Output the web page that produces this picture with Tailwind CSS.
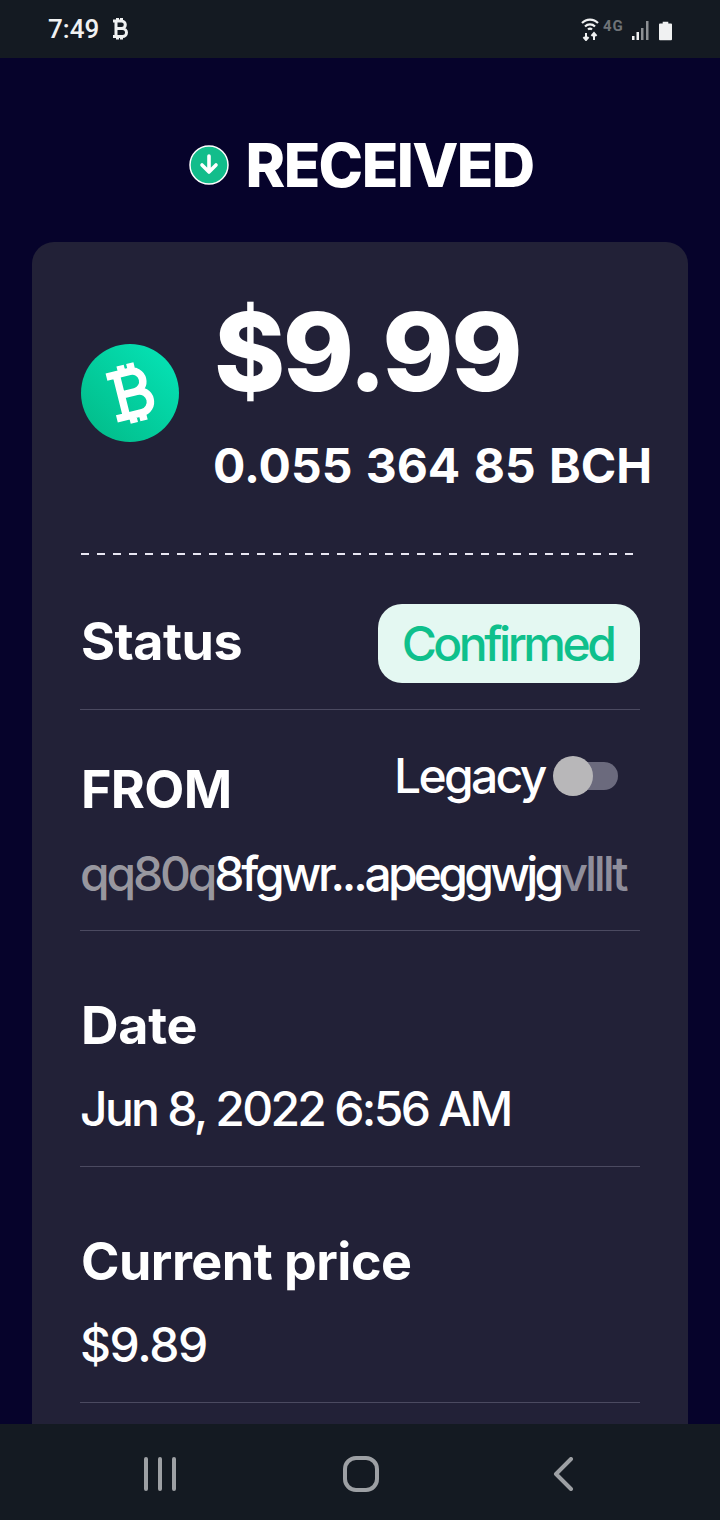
<!DOCTYPE html>
<html lang="en">

<head>
  <meta charset="UTF-8">
  <meta name="viewport" content="width=device-width, initial-scale=1.0">
  <title>Received</title>
  <script src="https://cdn.jsdelivr.net/npm/@tailwindcss/browser@4"></script>
</head>

<body class="bg-[#06032b] font-['Inter',sans-serif] text-white">
  <div class="relative flex h-[1520px] w-[720px] flex-col overflow-hidden">
    <!-- status bar -->
    <div class="flex h-[58px] shrink-0 items-center justify-between bg-[#141a22] pl-[48px] pr-[48px]">
      <div class="flex items-center gap-[13px]">
        <span class="font-['Roboto',sans-serif] text-[26px] font-medium leading-none text-[#f0f1f2]">7:49</span>
        <svg width="16" height="24" viewBox="0 0 16 24" fill="none" stroke="#f0f1f2" stroke-width="3">
          <path d="M1 4h8.500a3.600 3.600 0 0 1 0 7.600H3.500h7a3.900 3.900 0 0 1 0 8H1M4 4v15.600M5.500 1v3M9.500 1v3M5.500 19.600v3M9.500 19.600v3" />
        </svg>
      </div>
      <div class="flex items-end">
        <svg width="18" height="24" viewBox="0 0 18 24" fill="none" stroke="#f0f1f2" stroke-width="2.200">
          <path d="M1 6a11 11 0 0 1 16 0M4 9.500a7 7 0 0 1 10 0M7 12.500a3 3 0 0 1 4 0" />
          <path stroke-width="2" d="M5 16v7M2.500 20l2.500 3 2.500-3M13 23v-7M10.500 19l2.500-3 2.500 3" />
        </svg>
        <span class="mb-[7px] ml-[4px] w-[26px] font-['Roboto',sans-serif] text-[15px] font-bold leading-none tracking-[1px] text-[#6f7378]">4G</span>
        <svg width="18" height="20" viewBox="0 0 18 20" fill="#8d9094" class="ml-[3px]">
          <rect x="0" y="15" width="2.500" height="4" fill="#f0f1f2" />
          <rect x="4.500" y="11" width="2.500" height="8" fill="#f0f1f2" />
          <rect x="9" y="7" width="2.500" height="12" />
          <rect x="14" y="0" width="2.500" height="19" />
        </svg>
        <svg width="13" height="20" viewBox="0 0 14 20" fill="#f0f1f2" class="ml-[9px]">
          <path d="M4 0h6v2h3a1 1 0 0 1 1 1v16a1 1 0 0 1-1 1H1a1 1 0 0 1-1-1V3a1 1 0 0 1 1-1h3z" />
        </svg>
      </div>
    </div>

    <!-- title -->
    <div class="flex h-[184px] shrink-0 items-center justify-center gap-[17px] pl-[2px] pt-[30px]">
      <svg width="40" height="40" viewBox="0 0 40 40" fill="none">
        <circle cx="20" cy="20" r="19" fill="#12bd8b" stroke="#ffffff" stroke-width="1.500" />
        <path d="M20 11v16M13 20l7 7 7-7" stroke="#ffffff" stroke-width="3.600" stroke-linecap="round" stroke-linejoin="round" />
      </svg>
      <span class="text-[60px] font-extrabold leading-none tracking-[-1.600px]">RECEIVED</span>
    </div>

    <!-- card -->
    <div class="ml-[32px] mr-[32px] flex-1 rounded-t-[22px] bg-[#222137] pl-[48px] pr-[48px] pt-[50px]">
      <div class="flex items-center">
        <div class="ml-[1px] flex h-[98px] w-[98px] shrink-0 items-center justify-center rounded-full bg-gradient-to-tr from-[#02b986] to-[#06e6b9]">
          <svg width="98" height="98" viewBox="0 0 98 98" fill="none" stroke="#ffffff" stroke-width="7.500">
            <g transform="rotate(-14 49 49)">
              <path d="M30 28h24a10 10 0 0 1 0 21H40h16a11 11 0 0 1 0 22H30M40 28v43M46 20v8M56 20v8M46 71v8M56 71v8" />
            </g>
          </svg>
        </div>
        <div class="ml-[35px] flex flex-col whitespace-nowrap">
          <span class="text-[108px] font-extrabold leading-[120px] tracking-[-2.500px]">$9.99</span>
          <span class="-ml-[1px] mt-[26px] text-[48px] font-bold leading-[56px] [word-spacing:2px]">0.055 364 85 BCH</span>
        </div>
      </div>

      <div class="ml-[1px] mt-[59px] h-[2px] w-[552px] bg-[repeating-linear-gradient(90deg,#e8e6f2_0,#e8e6f2_8px,transparent_8px,transparent_16px)]"></div>

      <div class="mt-[49px] flex h-[79px] items-center justify-between">
        <span class="pb-[4px] pl-[1px] text-[52px] font-bold leading-none tracking-[-0.500px]">Status</span>
        <span class="flex h-[79px] w-[262px] items-center justify-center rounded-[24px] bg-[#e4f8f2] pr-[3px] text-[48px] font-medium tracking-[-3.500px] text-[#0fc08c]">Confirmed</span>
      </div>
      <div class="mt-[26px] h-[1px] bg-[#4b4a60]"></div>

      <div class="relative h-[220px]">
        <span class="absolute left-[1px] top-[52px] text-[52px] font-bold leading-[56px] tracking-[-0.700px]">FROM</span>
        <div class="absolute left-[314px] top-[38px] flex items-center">
          <span class="text-[48px] font-medium leading-[56px] tracking-[-2.700px]">Legacy</span>
          <div class="relative ml-[8px] h-[28px] w-[65px]">
            <div class="absolute right-0 top-0 h-[28px] w-[50px] rounded-full bg-[#6b6a7d]"></div>
            <div class="absolute -top-[6px] left-0 h-[40px] w-[40px] rounded-full bg-[#b8b7b9]"></div>
          </div>
        </div>
        <p class="absolute left-0 top-[136px] whitespace-nowrap text-[48px] font-medium leading-[56px] tracking-[-3.200px] text-white"><span class="text-[#98979f]">qq80q</span>8fgwr...<span class="tracking-[-3.800px]">apeggwjg</span><span class="text-[#8f8e9b]">vlllt</span></p>
      </div>
      <div class="h-[1px] bg-[#4b4a60]"></div>

      <div class="flex h-[235px] flex-col pl-[1px] pt-[67px]">
        <span class="text-[52px] font-bold leading-[56px] tracking-[-0.300px]">Date</span>
        <span class="mt-[27px] -ml-[1px] text-[48px] font-medium leading-[56px] tracking-[-2.700px]">Jun 8, 2022 6:56 AM</span>
      </div>
      <div class="h-[1px] bg-[#4b4a60]"></div>

      <div class="flex h-[235px] flex-col pl-[1px] pt-[67px]">
        <span class="text-[52px] font-bold leading-[56px] tracking-[-0.500px]">Current price</span>
        <span class="mt-[27px] -ml-[1px] text-[48px] font-medium leading-[56px] tracking-[-1.400px]">$9.89</span>
      </div>
      <div class="h-[1px] bg-[#4b4a60]"></div>
    </div>

    <!-- nav bar -->
    <div class="absolute inset-x-0 bottom-0 flex h-[96px] items-center gap-[167px] bg-[#141a22] pl-[144px] pt-[4px]">
      <svg width="32" height="34" viewBox="0 0 32 34" fill="none" stroke="#9da0a4" stroke-width="4" stroke-linecap="round">
        <path d="M2 2v30M16 2v30M30 2v30" />
      </svg>
      <svg width="36" height="36" viewBox="0 0 36 36" fill="none" stroke="#9da0a4" stroke-width="4">
        <rect x="2" y="2" width="32" height="32" rx="11" />
      </svg>
      <svg width="21" height="34" viewBox="0 0 21 34" fill="none" stroke="#9da0a4" stroke-width="4" stroke-linecap="round" stroke-linejoin="round" class="ml-[7px]">
        <path d="M18 2 3 17l15 15" />
      </svg>
    </div>
  </div>
</body>

</html>
